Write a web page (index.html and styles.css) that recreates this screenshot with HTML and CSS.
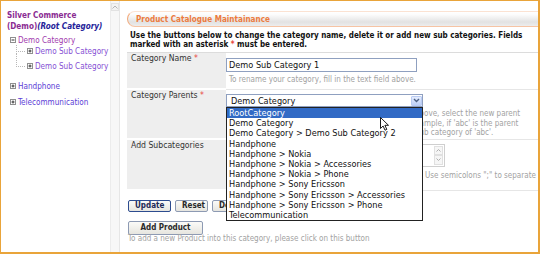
FILE: index.html
```html
<!DOCTYPE html>
<html lang="en">
<head>
  <meta charset="UTF-8">
  <title>Product Catalogue Maintainance</title>
  <link rel="stylesheet" href="styles.css">
</head>
<body>
  <div class="frame">
    <aside class="sidebar">
      <div class="store">Silver Commerce<br>(Demo)<em>(Root Category)</em></div>
      <div class="tree">
        <div class="node node-top cat-open">
          <svg class="toggle" width="6" height="6" viewBox="0 0 6 6"><rect x="0.5" y="0.5" width="5" height="5" fill="#fff" stroke="#8f8f8f"/><path d="M1.5 3h3" stroke="#333"/></svg>
          <span>Demo Category</span>
        </div>
        <div class="node node-sub first">
          <svg class="toggle" width="6" height="6" viewBox="0 0 6 6"><rect x="0.5" y="0.5" width="5" height="5" fill="#fff" stroke="#8f8f8f"/><path d="M1.5 3h3M3 1.5v3" stroke="#333"/></svg>
          <span>Demo Sub Category</span>
        </div>
        <div class="node node-sub second">
          <svg class="toggle" width="6" height="6" viewBox="0 0 6 6"><rect x="0.5" y="0.5" width="5" height="5" fill="#fff" stroke="#8f8f8f"/><path d="M1.5 3h3M3 1.5v3" stroke="#333"/></svg>
          <span>Demo Sub Category</span>
        </div>
        <div class="node node-top hand">
          <svg class="toggle" width="6" height="6" viewBox="0 0 6 6"><rect x="0.5" y="0.5" width="5" height="5" fill="#fff" stroke="#8f8f8f"/><path d="M1.5 3h3M3 1.5v3" stroke="#333"/></svg>
          <span>Handphone</span>
        </div>
        <div class="node node-top tele">
          <svg class="toggle" width="6" height="6" viewBox="0 0 6 6"><rect x="0.5" y="0.5" width="5" height="5" fill="#fff" stroke="#8f8f8f"/><path d="M1.5 3h3M3 1.5v3" stroke="#333"/></svg>
          <span>Telecommunication</span>
        </div>
      </div>
    </aside>

    <div class="scrolltrack">
      <span class="scroll-up">
        <svg width="6" height="4" viewBox="0 0 6 4"><path d="M0.5 3.5L3 1l2.5 2.5" fill="none" stroke="#b5b5b5"/></svg>
      </span>
    </div>

    <main class="main">
      <div class="title-bar">
        <h1>Product Catalogue Maintainance</h1>
      </div>

      <p class="intro">Use the buttons below to change the category name, delete it or add new sub categories. Fields<br>marked with an asterisk <span class="req">*</span> must be entered.</p>

      <table class="form">
        <tr class="row-name">
          <th>Category Name <span class="req">*</span></th>
          <td>
            <input class="text-input" type="text" value="Demo Sub Category 1">
            <div class="hint">To rename your category, fill in the text field above.</div>
          </td>
        </tr>
        <tr class="row-parent">
          <th>Category Parents <span class="req">*</span></th>
          <td>
            <div class="select-wrap">
              <div class="select">
                <span>Demo Category</span>
                <span class="select-btn">
                  <svg width="7" height="5" viewBox="0 0 7 5"><path d="M1 1l2.5 2.5L6 1" fill="none" stroke="#4d6185" stroke-width="1.4"/></svg>
                </span>
              </div>
              <ul class="dropdown">
                <li class="active">RootCategory</li>
                <li>Demo Category</li>
                <li>Demo Category &gt; Demo Sub Category 2</li>
                <li>Handphone</li>
                <li>Handphone &gt; Nokia</li>
                <li>Handphone &gt; Nokia &gt; Accessories</li>
                <li>Handphone &gt; Nokia &gt; Phone</li>
                <li>Handphone &gt; Sony Ericsson</li>
                <li>Handphone &gt; Sony Ericsson &gt; Accessories</li>
                <li>Handphone &gt; Sony Ericsson &gt; Phone</li>
                <li>Telecommunication</li>
              </ul>
              <svg class="cursor" width="10" height="14" viewBox="0 0 10 14"><path d="M0.5 0.5v11l2.6-2.5 1.9 4.2 1.8-.8-1.9-4.1h3.6z" fill="#fff" stroke="#000" stroke-width="0.9" stroke-linejoin="round"/></svg>
            </div>
            <div class="hint hint-block">
              <span class="cut">To move this category, pick it in the list ab</span>ove, select the new parent<br>
              <span class="cut">category and press Update. For exa</span>mple, if 'abc' is the parent<br>
              <span class="cut">category, this one becomes a su</span>b category of 'abc'.
            </div>
          </td>
        </tr>
        <tr class="row-subs">
          <th>Add Subcategories</th>
          <td>
            <div class="textarea-box">
              <textarea></textarea>
              <div class="ta-scroll">
                <span class="ta-arrow"><svg width="5" height="3" viewBox="0 0 5 3"><path d="M0.5 2.5L2.5 0.5l2 2" fill="none" stroke="#b0b0b0"/></svg></span>
                <span class="ta-arrow down"><svg width="5" height="3" viewBox="0 0 5 3"><path d="M0.5 0.5L2.5 2.5l2-2" fill="none" stroke="#b0b0b0"/></svg></span>
              </div>
            </div>
            <div class="hint nowrap"><span class="cut wide">Enter the new sub category names.</span>Use semicolons ";" to separate</div>
          </td>
        </tr>
      </table>

      <div class="actions">
        <button class="btn btn-default">Update</button>
        <button class="btn btn-reset">Reset</button>
        <button class="btn">Delete</button>
      </div>
      <div class="actions add">
        <button class="btn btn-big">Add Product</button>
      </div>
      <div class="hint foot">To add a new Product into this category, please click on this button</div>
    </main>
  </div>
</body>
</html>
```

FILE: styles.css
```css
:root {
  --frame: #e9a43a;
  --label-bg: #eeeeee;
  --hint: #a2a2a2;
  --req: #e8463c;
  --title: #ec7b3e;
  --field-border: #8fa0c0;
}

* {
  box-sizing: border-box;
}

body {
  margin: 0;
  font-family: "DejaVu Sans Condensed", "DejaVu Sans", sans-serif;
  font-stretch: condensed;
  font-size: 8.6px;
  color: #222;
  background: #fff;
}

.frame {
  width: 540px;
  height: 254px;
  border: 1px solid var(--frame);
  border-right-width: 2px;
  border-bottom-width: 2px;
  display: flex;
  overflow: hidden;
}

/* left tree */
.sidebar {
  width: 109px;
  flex: none;
  padding: 9px 0 0 6px;
}

.store {
  font-weight: bold;
  font-size: 8.1px;
  line-height: 10.5px;
  color: #8a2b92;
}

.store em {
  color: #26249a;
}

.tree {
  margin-top: 4px;
}

.node {
  display: flex;
  align-items: center;
  gap: 2px;
  height: 10px;
  line-height: 10px;
  white-space: nowrap;
  font-size: 8.1px;
}

.toggle {
  flex: none;
}

.node-top {
  padding-left: 3px;
  color: #5b3ed6;
}

.cat-open {
  color: #a13aae;
}

.node-sub {
  position: relative;
  padding-left: 20px;
  color: #8650d4;
}

.node-sub::before {
  content: "";
  position: absolute;
  left: 9px;
  width: 8px;
  border-left: 1px dotted #b8b8b8;
  border-bottom: 1px dotted #b8b8b8;
}

.node-sub.first {
  margin-top: 1px;
}

.node-sub.first::before {
  top: -1px;
  height: 6px;
}

.node-sub.second {
  margin-top: 5px;
}

.node-sub.second::before {
  top: -8px;
  height: 13px;
}

.hand {
  margin-top: 10px;
}

.tele {
  margin-top: 6px;
}

.scrolltrack {
  width: 10px;
  flex: none;
  background: #f7f7f7;
  border-left: 1px solid #ececec;
  border-right: 1px solid #e6e6e6;
}

.scroll-up {
  display: flex;
  align-items: center;
  justify-content: center;
  margin-top: 2px;
  height: 8px;
  border: 1px solid #e2e2e2;
  background: #f2f2f2;
}

/* main panel */
.main {
  flex: 1;
  min-width: 0;
  padding-left: 7px;
  overflow: hidden;
}

.title-bar {
  margin-top: 10px;
  height: 16px;
  padding-left: 8px;
  border: 1px solid #f6c4a4;
  border-top-color: #fbe2d2;
  border-left-color: #f2a878;
  border-right: none;
  border-radius: 8px 0 0 8px;
  background: linear-gradient(#fff 0%, #fcfcfc 18%, #e2e2e2 72%, #ededed 100%);
}

.title-bar h1 {
  margin: 0;
  font-size: 8.1px;
  line-height: 14px;
  font-weight: bold;
  color: var(--title);
}

.intro {
  margin: 4px 0 3px 3px;
  font-size: 8px;
  line-height: 9px;
  font-weight: bold;
  color: #111;
}

.req {
  color: var(--req);
}

.form {
  width: 100%;
  table-layout: fixed;
  border-collapse: separate;
  border-spacing: 0;
  border-top: 1px solid #dcdcdc;
}

.form th {
  width: 99px;
  padding: 1px 0 0 4px;
  background: var(--label-bg);
  border-bottom: 2px solid #fff;
  text-align: left;
  vertical-align: top;
  font-weight: normal;
  line-height: 9px;
  white-space: nowrap;
  color: #333;
}

.form td {
  vertical-align: top;
  border-bottom: 1px solid #e6e6e6;
}

.row-name td {
  padding: 5px 0 5px 0;
}

.row-parent td {
  padding: 4px 0 2px 0;
}

.row-subs td {
  padding: 4px 0 10px 0;
}

.text-input {
  display: block;
  width: 191px;
  height: 14px;
  margin: 0;
  padding: 0 0 0 2px;
  border: 1px solid var(--field-border);
  font: inherit;
  font-size: 9.1px;
  color: #111;
}

.hint {
  padding-left: 3px;
  font-size: 8px;
  line-height: 9px;
  color: var(--hint);
}

.row-name .hint {
  margin-top: 3px;
}

.hint-block {
  margin-top: 2.4px;
  line-height: 9.2px;
  white-space: nowrap;
}

.nowrap {
  margin-top: 4px;
  white-space: nowrap;
}

/* the start of these hints lies under the open list */
.cut {
  display: inline-block;
  width: 195px;
  overflow: hidden;
  white-space: nowrap;
  vertical-align: top;
  text-align: right;
}

.cut.wide {
  width: 196px;
  text-align: left;
}

.select-wrap {
  position: relative;
  width: 197px;
}

.select {
  display: flex;
  align-items: center;
  justify-content: space-between;
  height: 13px;
  padding-left: 4px;
  border: 1px solid var(--field-border);
  font-size: 9.1px;
  color: #111;
}

.select-btn {
  display: flex;
  align-items: center;
  justify-content: center;
  width: 11px;
  height: 10px;
  margin-right: 0;
  border: 1px solid #b9cbf3;
  border-radius: 1px;
  background: linear-gradient(#e4ecfd, #bccff7);
}

.dropdown {
  position: absolute;
  top: 100%;
  left: 0;
  z-index: 2;
  width: 197px;
  margin: 0;
  padding: 0;
  list-style: none;
  border: 1px solid #222;
  background: #fff;
  font-size: 9.1px;
  line-height: 10.2px;
  color: #111;
}

.dropdown li {
  padding-left: 2px;
  white-space: nowrap;
}

.dropdown li.active {
  background: #316ac5;
  color: #fff;
}

.cursor {
  position: absolute;
  left: 154px;
  top: 23px;
  z-index: 3;
}

.textarea-box {
  display: flex;
  width: 219px;
  height: 23px;
  border: 1px solid #cfcfcf;
}

.textarea-box textarea {
  flex: 1;
  border: none;
  resize: none;
  margin: 0;
  padding: 0;
}

.ta-scroll {
  display: flex;
  flex-direction: column;
  width: 9px;
  margin: 1px 1px 1px 0;
}

.ta-arrow {
  display: flex;
  align-items: center;
  justify-content: center;
  height: 9px;
  border: 1px solid #e0e0e0;
  background: #f6f6f6;
}

.ta-arrow.down {
  height: 11px;
}

.actions {
  display: flex;
  gap: 4px;
  margin: 9px 0 0 1px;
}

.btn {
  height: 12px;
  padding: 0 6px;
  border: 1px solid #8d9ab3;
  border-radius: 2px;
  background: linear-gradient(#fbfbf8, #e6e5df);
  font-family: inherit;
  font-size: 8px;
  font-weight: bold;
  line-height: 10px;
  color: #2a2a2a;
}

.btn-default {
  width: 43px;
  border-color: #2d4c8f;
  color: #1d2a58;
}

.btn-reset {
  width: 33px;
}

.actions.add {
  margin-top: 9px;
}

.btn-big {
  width: 75px;
  height: 14px;
  padding: 0;
}

.foot {
  padding-left: 1px;
  line-height: 8px;
}
```
